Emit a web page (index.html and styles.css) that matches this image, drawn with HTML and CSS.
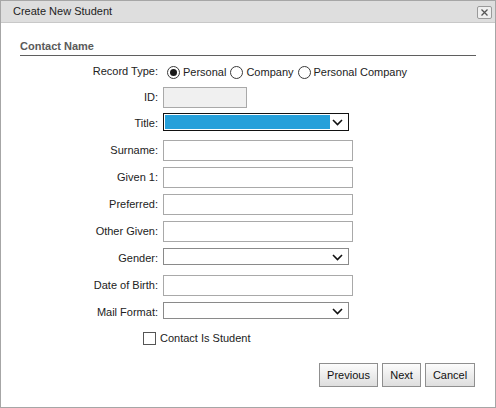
FILE: index.html
```html
<!DOCTYPE html>
<html>
<head>
<meta charset="utf-8">
<title>Create New Student</title>
<link rel="stylesheet" href="styles.css">
</head>
<body>
<div class="dialog">
  <div class="titlebar">
    <span class="title">Create New Student</span>
    <span class="close"><svg width="9" height="9" viewBox="0 0 9 9"><path d="M1.5 1.5 L7.5 7.5 M7.5 1.5 L1.5 7.5" stroke="#555" stroke-width="1.3" fill="none"/></svg></span>
  </div>
  <div class="body">
    <div class="section-head">Contact Name</div>
    <div class="form">
      <div class="row row-tight">
        <span class="label">Record Type:</span>
        <div class="radios">
          <span class="radio checked"></span><span class="opt">Personal</span>
          <span class="radio"></span><span class="opt">Company</span>
          <span class="radio"></span><span class="opt">Personal Company</span>
        </div>
      </div>
      <div class="row row-tight">
        <span class="label">ID:</span>
        <span class="input input-id"></span>
      </div>
      <div class="row">
        <span class="label">Title:</span>
        <span class="select select-focus"><span class="sel-hl"></span><svg class="chev" width="11" height="7" viewBox="0 0 11 7"><path d="M1 1 L5.5 5.5 L10 1" stroke="#111" stroke-width="1.6" fill="none"/></svg></span>
      </div>
      <div class="row">
        <span class="label">Surname:</span>
        <span class="input"></span>
      </div>
      <div class="row">
        <span class="label">Given 1:</span>
        <span class="input"></span>
      </div>
      <div class="row">
        <span class="label">Preferred:</span>
        <span class="input"></span>
      </div>
      <div class="row">
        <span class="label">Other Given:</span>
        <span class="input"></span>
      </div>
      <div class="row">
        <span class="label">Gender:</span>
        <span class="select"><svg class="chev" width="11" height="7" viewBox="0 0 11 7"><path d="M1 1 L5.5 5.5 L10 1" stroke="#111" stroke-width="1.6" fill="none"/></svg></span>
      </div>
      <div class="row">
        <span class="label">Date of Birth:</span>
        <span class="input"></span>
      </div>
      <div class="row row-tight">
        <span class="label">Mail Format:</span>
        <span class="select"><svg class="chev" width="11" height="7" viewBox="0 0 11 7"><path d="M1 1 L5.5 5.5 L10 1" stroke="#111" stroke-width="1.6" fill="none"/></svg></span>
      </div>
      <div class="row row-check">
        <span class="checkbox"></span><span class="opt">Contact Is Student</span>
      </div>
    </div>
    <div class="actions">
      <span class="btn btn-prev">Previous</span>
      <span class="btn btn-next">Next</span>
      <span class="btn btn-cancel">Cancel</span>
    </div>
  </div>
</div>
</body>
</html>
```
FILE: styles.css
```css
* { box-sizing: border-box; }
html, body { margin: 0; padding: 0; background: #fff; }
body {
  font-family: "Liberation Sans", Arial, sans-serif;
  font-size: 11px;
  color: #222;
}
.dialog {
  width: 496px;
  height: 408px;
  border: 1px solid #a6a6a6;
  display: flex;
  flex-direction: column;
  background: #fff;
}
.titlebar {
  height: 22px;
  background: #dedede;
  border-bottom: 1px solid #c8c8c8;
  display: flex;
  align-items: center;
  justify-content: space-between;
  padding: 0 3px 0 12px;
}
.title { color: #222; font-size: 11px; line-height: 13px; }
.close {
  width: 15px;
  height: 13px;
  border: 1px solid #9a9a9a;
  border-radius: 2px;
  background: #efefef;
  display: flex;
  align-items: center;
  justify-content: center;
  margin-top: 1px;
}
.body {
  flex: 1;
  padding: 17px 19px 0 19px;
  display: flex;
  flex-direction: column;
}
.section-head {
  font-weight: bold;
  color: #5a5a5a;
  line-height: 13px;
  padding-bottom: 2px;
  border-bottom: 1px solid #5f5f5f;
}
.form {
  padding-top: 5px;
  display: flex;
  flex-direction: column;
}
.row {
  height: 21px;
  margin-bottom: 6px;
  display: flex;
  align-items: flex-start;
}
.row-tight { margin-bottom: 5px; }
.label {
  width: 138px;
  margin-right: 5px;
  text-align: right;
  line-height: 21px;
  color: #222;
  flex: none;
}
.radios {
  display: flex;
  align-items: center;
  height: 22px;
}
.radio {
  width: 13px;
  height: 13px;
  border: 1px solid #3a3a3a;
  border-radius: 50%;
  margin: 0 3px 0 4px;
  background: #fff;
  display: flex;
  align-items: center;
  justify-content: center;
  flex: none;
}
.radio.checked::after {
  content: "";
  width: 7px;
  height: 7px;
  border-radius: 50%;
  background: #1a1a1a;
}
.opt { line-height: 21px; color: #222; }
.input {
  width: 190px;
  height: 21px;
  border: 1px solid #a9a9a9;
  background: #fff;
}
.input-id {
  width: 84px;
  background: #f0f0f0;
}
.select {
  width: 186px;
  height: 17px;
  border: 1px solid #8a8a8a;
  background: #fff;
  position: relative;
  display: flex;
  align-items: center;
}
.select-focus {
  height: 18px;
  border-color: #111;
  padding: 1px 1px;
}
.sel-hl {
  width: 165px;
  height: 14px;
  background: #26a0da;
}
.chev {
  position: absolute;
  right: 5px;
  top: 50%;
  margin-top: -3px;
}
.row-check {
  padding-left: 123px;
  align-items: center;
  margin-bottom: 0;
}
.checkbox {
  width: 13px;
  height: 13px;
  border: 1px solid #555;
  background: #fff;
  margin-right: 4px;
  flex: none;
}
.actions {
  margin-top: 14px;
  padding-right: 1px;
  display: flex;
  justify-content: flex-end;
  gap: 4px;
}
.btn {
  height: 24px;
  line-height: 22px;
  text-align: center;
  border: 1px solid #8f8f8f;
  background: linear-gradient(#fcfcfc, #dedede);
  color: #111;
  font-size: 11px;
}
.btn-prev { width: 59px; }
.btn-next { width: 39px; }
.btn-cancel { width: 50px; }
```
